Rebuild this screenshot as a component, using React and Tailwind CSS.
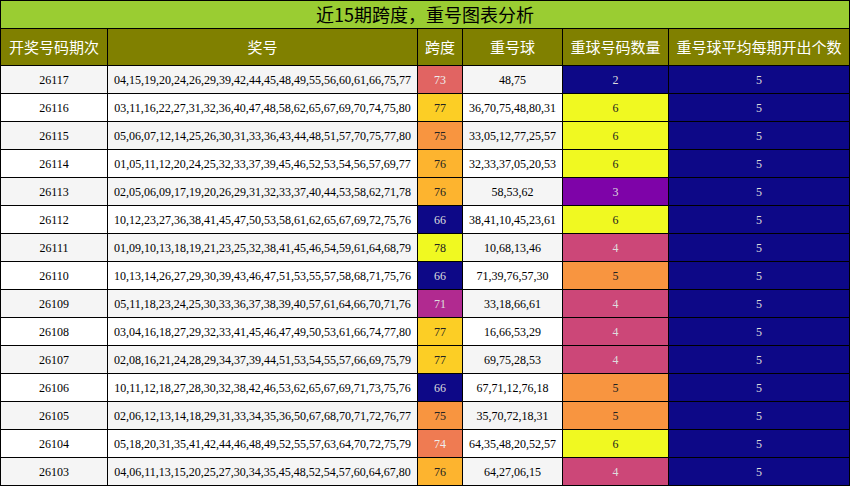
const rows = [
["26117","04,15,19,20,24,26,29,39,42,44,45,48,49,55,56,60,61,66,75,77",73,"48,75",2],
["26116","03,11,16,22,27,31,32,36,40,47,48,58,62,65,67,69,70,74,75,80",77,"36,70,75,48,80,31",6],
["26115","05,06,07,12,14,25,26,30,31,33,36,43,44,48,51,57,70,75,77,80",75,"33,05,12,77,25,57",6],
["26114","01,05,11,12,20,24,25,32,33,37,39,45,46,52,53,54,56,57,69,77",76,"32,33,37,05,20,53",6],
["26113","02,05,06,09,17,19,20,26,29,31,32,33,37,40,44,53,58,62,71,78",76,"58,53,62",3],
["26112","10,12,23,27,36,38,41,45,47,50,53,58,61,62,65,67,69,72,75,76",66,"38,41,10,45,23,61",6],
["26111","01,09,10,13,18,19,21,23,25,32,38,41,45,46,54,59,61,64,68,79",78,"10,68,13,46",4],
["26110","10,13,14,26,27,29,30,39,43,46,47,51,53,55,57,58,68,71,75,76",66,"71,39,76,57,30",5],
["26109","05,11,18,23,24,25,30,33,36,37,38,39,40,57,61,64,66,70,71,76",71,"33,18,66,61",4],
["26108","03,04,16,18,27,29,32,33,41,45,46,47,49,50,53,61,66,74,77,80",77,"16,66,53,29",4],
["26107","02,08,16,21,24,28,29,34,37,39,44,51,53,54,55,57,66,69,75,79",77,"69,75,28,53",4],
["26106","10,11,12,18,27,28,30,32,38,42,46,53,62,65,67,69,71,73,75,76",66,"67,71,12,76,18",5],
["26105","02,06,12,13,14,18,29,31,33,34,35,36,50,67,68,70,71,72,76,77",75,"35,70,72,18,31",5],
["26104","05,18,20,31,35,41,42,44,46,48,49,52,55,57,63,64,70,72,75,79",74,"64,35,48,20,52,57",6],
["26103","04,06,11,13,15,20,25,27,30,34,35,45,48,52,54,57,60,64,67,80",76,"64,27,06,15",4],
];
const span = {66:"bg-[#0d0887] text-[#ddd]",71:"bg-[#b12a90] text-[#ddd]",73:"bg-[#e16462] text-[#eee]",74:"bg-[#ef7b52] text-[#eee]",75:"bg-[#f89540] text-[#222]",76:"bg-[#fdb42f] text-[#222]",77:"bg-[#fcce25] text-[#222]",78:"bg-[#f0f921] text-[#222]"};
const cnt = {2:"bg-[#0d0887] text-[#ddd]",3:"bg-[#7e03a8] text-[#ddd]",4:"bg-[#cc4778] text-[#ddd]",5:"bg-[#f89540] text-[#222]",6:"bg-[#f0f921] text-[#222]"};
const td = "border border-black text-center text-[12px] p-0 h-[28px]";
export default function App(){
  return <div className="w-[850px] h-[486px] overflow-hidden bg-white" style={{fontFamily:'"Liberation Serif","Noto Sans CJK SC",serif'}}>
    <table className="w-[850px] border-collapse table-fixed">
      <colgroup><col className="w-[107px]"/><col className="w-[310px]"/><col className="w-[45px]"/><col className="w-[100px]"/><col className="w-[106px]"/><col/></colgroup>
      <thead>
        <tr><th colSpan={6} className="border border-black bg-[#9acd32] h-[28px] font-normal text-[18px] text-black p-0" style={{fontFamily:'"Noto Sans CJK SC",sans-serif'}}>近15期跨度，重号图表分析</th></tr>
        <tr className="bg-[#808000] text-white" style={{fontFamily:'"Noto Sans CJK SC",sans-serif'}}>
          {["开奖号码期次","奖号","跨度","重号球","重球号码数量","重号球平均每期开出个数"].map(h=><th key={h} className="border border-black font-normal text-[15px] h-[37px] p-0">{h}</th>)}
        </tr>
      </thead>
      <tbody>
        {rows.map((r,i)=><tr key={r[0]} className={i%2===0?"bg-[#f5f5f5]":"bg-white"}>
          <td className={td}>{r[0]}</td>
          <td className={td}>{r[1]}</td>
          <td className={td+" "+span[r[2]]}>{r[2]}</td>
          <td className={td}>{r[3]}</td>
          <td className={td+" "+cnt[r[4]]}>{r[4]}</td>
          <td className={td+" bg-[#0d0887] text-[#ddd]"}>5</td>
        </tr>)}
      </tbody>
    </table>
  </div>;
}
